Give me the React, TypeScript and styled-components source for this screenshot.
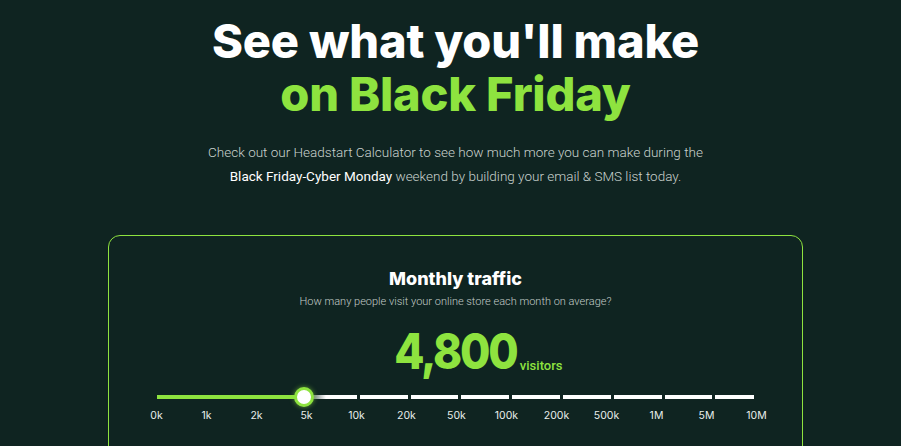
import styled, { createGlobalStyle } from 'styled-components';

const GREEN = '#8ee33f';
const BG = '#0f2421';

const GlobalStyle = createGlobalStyle`
  html, body {
    margin: 0;
    padding: 0;
    background: ${BG};
  }
  body {
    font-family: 'Roboto', 'Liberation Sans', sans-serif;
    overflow: hidden;
  }
`;

const TICKS = ['0k', '1k', '2k', '5k', '10k', '20k', '50k', '100k', '200k', '500k', '1M', '5M', '10M'];
const STEP = 50;
const value = 2.94; // thumb position in tick units

export default function App() {
  return (
    <>
      <GlobalStyle />
      <Page>
        <Title>
          See what you'll make
          <br />
          <Highlight>on Black Friday</Highlight>
        </Title>
        <Intro>
          Check out our Headstart Calculator to see how much more you can make during the
          <br />
          <Strong>Black Friday-Cyber Monday</Strong> weekend by building your email &amp; SMS list today.
        </Intro>
        <Card>
          <CardTitle>Monthly traffic</CardTitle>
          <CardSub>How many people visit your online store each month on average?</CardSub>
          <ValueRow>
            <BigValue>4,800</BigValue>
            <Unit>visitors</Unit>
          </ValueRow>
          <Slider>
            <Track>
              {TICKS.slice(1).map((t, i) => (
                <Segment key={t} $last={i === TICKS.length - 2} />
              ))}
              <Fill style={{ width: value * STEP }} />
              <Thumb style={{ left: value * STEP }} />
            </Track>
            <Labels>
              {TICKS.map((t) => (
                <Label key={t}>{t}</Label>
              ))}
            </Labels>
          </Slider>
        </Card>
      </Page>
    </>
  );
}

const Page = styled.div`
  display: flex;
  flex-direction: column;
  align-items: center;
  padding: 14px 0 0 10px;
`;

const Title = styled.h1`
  margin: 0;
  font-family: 'Inter', 'Liberation Sans', sans-serif;
  font-weight: 800;
  font-size: 47px;
  line-height: 53px;
  letter-spacing: -0.2px;
  color: #ffffff;
  text-align: center;
`;

const Highlight = styled.span`
  color: ${GREEN};
`;

const Intro = styled.p`
  margin: 20px 0 0;
  font-size: 13.5px;
  font-weight: 300;
  line-height: 24px;
  color: #c9d2ce;
  text-align: center;
`;

const Strong = styled.span`
  font-weight: 400;
  color: #ffffff;
`;

const Card = styled.div`
  margin-top: 47px;
  width: 695px;
  height: 260px;
  box-sizing: border-box;
  border: 1px solid ${GREEN};
  border-radius: 12px;
  display: flex;
  flex-direction: column;
  align-items: center;
  padding-top: 31px;
`;

const CardTitle = styled.h2`
  margin: 0;
  font-family: 'Inter', 'Liberation Sans', sans-serif;
  font-weight: 800;
  font-size: 18px;
  line-height: 24px;
  color: #ffffff;
`;

const CardSub = styled.p`
  margin: 4px 0 0;
  font-size: 11px;
  font-weight: 300;
  line-height: 14px;
  color: #c3ccc8;
`;

const ValueRow = styled.div`
  position: relative;
  margin-top: 17px;
  display: flex;
  align-items: baseline;
`;

const BigValue = styled.span`
  font-family: 'Inter', 'Liberation Sans', sans-serif;
  font-weight: 800;
  font-size: 50px;
  line-height: 50px;
  letter-spacing: -2.5px;
  color: ${GREEN};
  display: inline-block;
  transform: scaleX(0.88);
`;

const Unit = styled.span`
  position: absolute;
  left: 100%;
  bottom: 3px;
  margin-left: -5px;
  font-size: 13px;
  font-weight: 500;
  color: ${GREEN};
`;

const Slider = styled.div`
  margin-top: 11px;
  width: 650px;
  display: flex;
  flex-direction: column;
  align-items: flex-start;
`;

const Track = styled.div`
  position: relative;
  margin-left: 26px;
  width: 598px;
  height: 4px;
  display: flex;
  gap: 3px;
  margin-top: 8px;
`;

const Segment = styled.div<{ $last?: boolean }>`
  flex: ${(p) => (p.$last ? '0 0 39px' : '1 1 0')};
  height: 4px;
  background: #ffffff;
`;

const Fill = styled.div`
  position: absolute;
  left: 0;
  top: 0;
  height: 4px;
  background: ${GREEN};
  &::after {
    content: '';
    position: absolute;
    right: -22px;
    top: 0;
    width: 22px;
    height: 4px;
    background: linear-gradient(90deg, ${BG}, rgba(255, 255, 255, 0));
  }
`;

const Thumb = styled.div`
  position: absolute;
  top: 2px;
  width: 14px;
  height: 14px;
  margin: -10px 0 0 -10px;
  border: 3px solid ${GREEN};
  border-radius: 50%;
  background: #ffffff;
  box-shadow: 0 0 5px rgba(142, 227, 63, 0.6);
`;

const Labels = styled.div`
  display: flex;
  margin-top: 10px;
  margin-left: 1px;
`;

const Label = styled.span`
  width: 50px;
  text-align: center;
  font-family: 'Inter', 'Liberation Sans', sans-serif;
  font-size: 10.5px;
  line-height: 14px;
  color: #e8eeeb;
`;
